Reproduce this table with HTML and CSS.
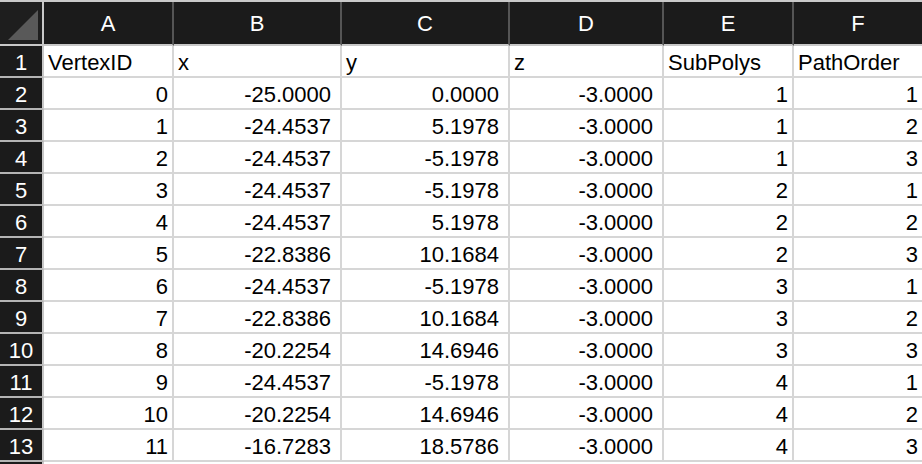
FILE: index.html
```html
<!DOCTYPE html>
<html>
<head>
<meta charset="utf-8">
<link rel="stylesheet" href="styles.css">
</head>
<body>
<div class="sheet">
  <div class="hd corner"><span class="tri"></span></div>
  <div class="hd col">A</div>
  <div class="hd col">B</div>
  <div class="hd col">C</div>
  <div class="hd col">D</div>
  <div class="hd col">E</div>
  <div class="hd col">F</div>

  <div class="rh">1</div><div class="c l">VertexID</div><div class="c l">x</div><div class="c l">y</div><div class="c l">z</div><div class="c l">SubPolys</div><div class="c l">PathOrder</div>
  <div class="rh">2</div><div class="c">0</div><div class="c d">-25.0000</div><div class="c d">0.0000</div><div class="c d">-3.0000</div><div class="c">1</div><div class="c">1</div>
  <div class="rh">3</div><div class="c">1</div><div class="c d">-24.4537</div><div class="c d">5.1978</div><div class="c d">-3.0000</div><div class="c">1</div><div class="c">2</div>
  <div class="rh">4</div><div class="c">2</div><div class="c d">-24.4537</div><div class="c d">-5.1978</div><div class="c d">-3.0000</div><div class="c">1</div><div class="c">3</div>
  <div class="rh">5</div><div class="c">3</div><div class="c d">-24.4537</div><div class="c d">-5.1978</div><div class="c d">-3.0000</div><div class="c">2</div><div class="c">1</div>
  <div class="rh">6</div><div class="c">4</div><div class="c d">-24.4537</div><div class="c d">5.1978</div><div class="c d">-3.0000</div><div class="c">2</div><div class="c">2</div>
  <div class="rh">7</div><div class="c">5</div><div class="c d">-22.8386</div><div class="c d">10.1684</div><div class="c d">-3.0000</div><div class="c">2</div><div class="c">3</div>
  <div class="rh">8</div><div class="c">6</div><div class="c d">-24.4537</div><div class="c d">-5.1978</div><div class="c d">-3.0000</div><div class="c">3</div><div class="c">1</div>
  <div class="rh">9</div><div class="c">7</div><div class="c d">-22.8386</div><div class="c d">10.1684</div><div class="c d">-3.0000</div><div class="c">3</div><div class="c">2</div>
  <div class="rh">10</div><div class="c">8</div><div class="c d">-20.2254</div><div class="c d">14.6946</div><div class="c d">-3.0000</div><div class="c">3</div><div class="c">3</div>
  <div class="rh">11</div><div class="c">9</div><div class="c d">-24.4537</div><div class="c d">-5.1978</div><div class="c d">-3.0000</div><div class="c">4</div><div class="c">1</div>
  <div class="rh">12</div><div class="c">10</div><div class="c d">-20.2254</div><div class="c d">14.6946</div><div class="c d">-3.0000</div><div class="c">4</div><div class="c">2</div>
  <div class="rh">13</div><div class="c">11</div><div class="c d">-16.7283</div><div class="c d">18.5786</div><div class="c d">-3.0000</div><div class="c">4</div><div class="c">3</div>
</div>
</body>
</html>
```
FILE: styles.css
```css
html, body {
  margin: 0;
  padding: 0;
  background: #ffffff;
  overflow: hidden;
}
.sheet {
  display: grid;
  grid-template-columns: 44px 130px 168px 168px 154px 130px 130px;
  grid-template-rows: 44px;
  grid-auto-rows: 32px;
  border-top: 2px solid #c9c9c9;
  font-family: "Liberation Sans", Arial, sans-serif;
  font-size: 22px;
  color: #000;
  width: 924px;
  height: 464px;
  background: linear-gradient(to right, #1b1b1b 42px, #c8c8c8 42px, #c8c8c8 44px, #fff 44px);
}
.hd {
  background: #1b1b1b;
  color: #fff;
  border-right: 2px solid #555;
  border-bottom: 2px solid #c8c8c8;
  display: flex;
  align-items: center;
  justify-content: center;
  padding-top: 1px;
  box-sizing: border-box;
}
.corner {
  position: relative;
  background: #1e1e1e;
  border-right-color: #c8c8c8;
}
.tri {
  position: absolute;
  right: 4px;
  bottom: 4px;
  width: 0;
  height: 0;
  border-style: solid;
  border-width: 0 0 30px 30px;
  border-color: transparent transparent #595959 transparent;
}
.rh {
  background: #1b1b1b;
  color: #fff;
  border-right: 2px solid #c8c8c8;
  border-bottom: 2px solid #b4b4b4;
  display: flex;
  align-items: flex-end;
  justify-content: center;
  line-height: 26px;
}
.c {
  border-right: 2px solid #d6d6d6;
  border-bottom: 2px solid #d6d6d6;
  display: flex;
  align-items: flex-end;
  justify-content: flex-end;
  padding: 0 4px 0 4px;
  line-height: 26px;
  white-space: nowrap;
  overflow: hidden;
}
.c.d {
  padding-right: 9px;
}
.c.l {
  justify-content: flex-start;
  padding-left: 4px;
}
```
